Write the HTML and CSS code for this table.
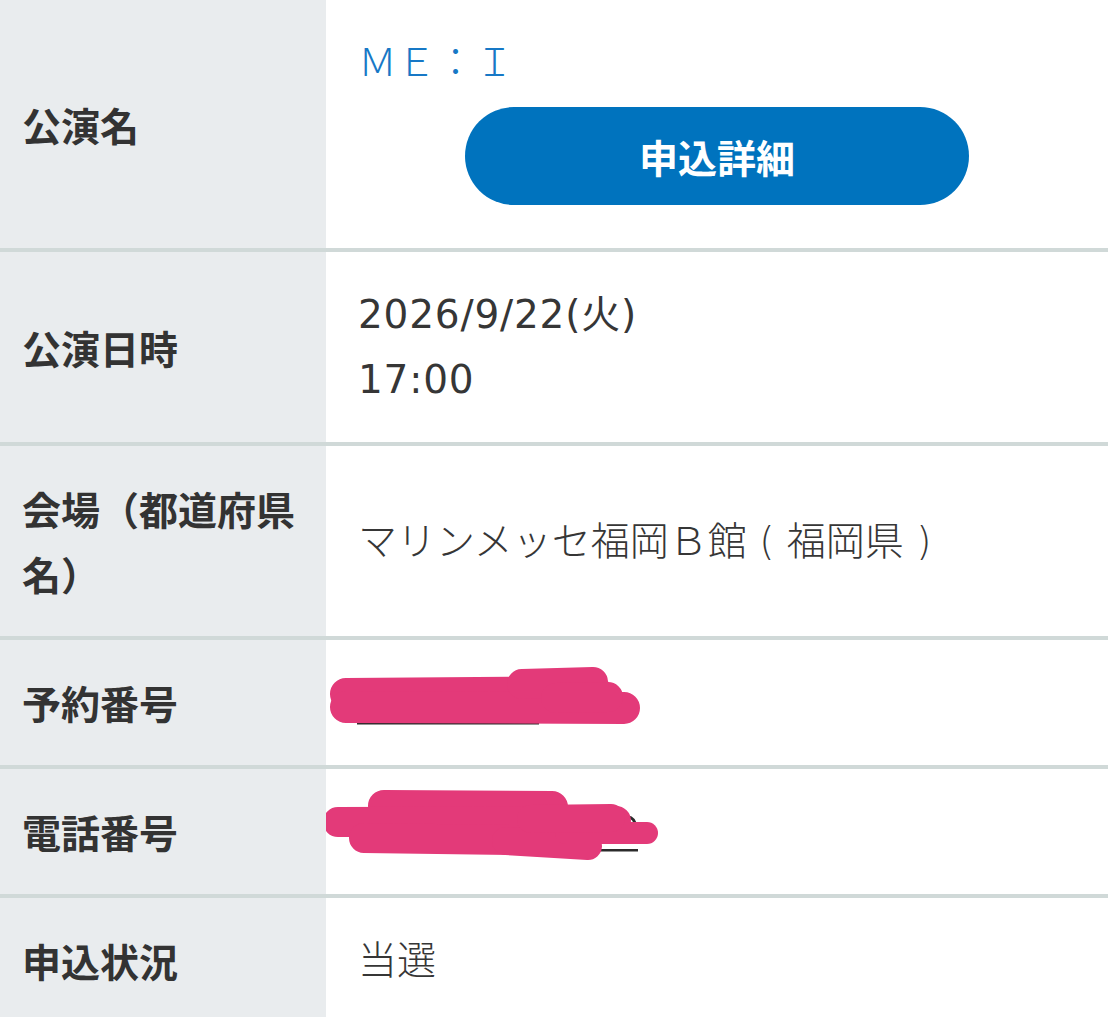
FILE: index.html
```html
<!DOCTYPE html>
<html lang="ja">
  <head>
    <meta charset="UTF-8" />
    <title>申込内容</title>
    <link rel="stylesheet" href="styles.css">
  </head>
  <body>
    <table class="detail-table">
      <tr>
        <th>公演名</th>
        <td>
          <div class="show-name">ＭＥ：Ｉ</div>
          <a class="button" href="#">申込詳細</a>
        </td>
      </tr>
      <tr>
        <th>公演日時</th>
        <td class="date">2026/9/22(火)<br />17:00</td>
      </tr>
      <tr>
        <th>会場（都道府県名）</th>
        <td>マリンメッセ福岡Ｂ館 ( 福岡県 )</td>
      </tr>
      <tr>
        <th>予約番号</th>
        <td class="masked">
          <span class="blank"></span>
          <!-- redaction scribble -->
          <svg class="scribble" viewBox="0 0 782 126" width="782" height="126">
            <rect x="31" y="82" width="182" height="2.5" fill="#2b2b2b" />
            <g stroke="#e33a79" stroke-linecap="round" fill="none">
              <line x1="20" y1="54" x2="270" y2="52" stroke-width="32" />
              <line x1="20" y1="67" x2="298" y2="68" stroke-width="32" />
              <line x1="196" y1="44" x2="267" y2="42" stroke-width="30" />
              <line x1="230" y1="58" x2="282" y2="57" stroke-width="30" />
            </g>
          </svg>
        </td>
      </tr>
      <tr>
        <th>電話番号</th>
        <td class="masked">
          <span class="blank"></span>
          <svg class="scribble" viewBox="0 0 782 123" width="782" height="123">
            <rect x="272" y="80" width="40" height="2.5" fill="#2b2b2b" />
            <path d="M299 49 Q306 46 309 54" stroke="#2b2b2b" stroke-width="3" fill="none" />
            <g stroke="#e33a79" stroke-linecap="round" fill="none">
              <line x1="58" y1="37" x2="226" y2="38" stroke-width="32" />
              <line x1="12" y1="53" x2="290" y2="52" stroke-width="30" />
              <line x1="38" y1="69" x2="190" y2="71" stroke-width="30" />
              <line x1="180" y1="72" x2="262" y2="77" stroke-width="28" />
              <line x1="240" y1="64" x2="321" y2="64" stroke-width="22" />
              <line x1="205" y1="50" x2="285" y2="49" stroke-width="28" />
            </g>
          </svg>
        </td>
      </tr>
      <tr>
        <th>申込状況</th>
        <td>当選</td>
      </tr>
    </table>
  </body>
</html>
```

FILE: styles.css
```css
/* Table of the application details */
body {
  font-family: "Noto Sans CJK JP", "Noto Sans", sans-serif;
  margin: 0;
  padding: 0;
  color: #333;
  background-color: #fff;
}
.detail-table {
  width: 100%;
  border-collapse: collapse;
  font-size: 39px;
  line-height: 65px;
}
.detail-table tr {
  border-bottom: 4px solid #d0d9d8;
}
.detail-table th {
  width: 304px;
  padding: 30px 0 30px 22px;
  background-color: #e9ecee;
  text-align: left;
  font-weight: bold;
  vertical-align: middle;
}
.detail-table td {
  padding: 30px 20px 30px 32px;
  vertical-align: middle;
  font-family: "DejaVu Sans", "Noto Sans CJK JP", sans-serif;
  font-weight: 300;
  color: #363636;
}
.detail-table td.date {
  font-weight: normal;
  letter-spacing: 0.8px;
}
.show-name {
  color: #1778c6;
}
.button {
  display: block;
  width: 504px;
  height: 98px;
  line-height: 98px;
  margin: 12px auto 13px;
  text-align: center;
  background-color: #0073be;
  color: white;
  font-family: "Noto Sans CJK JP", sans-serif;
  font-weight: bold;
  text-decoration: none;
  border-radius: 49px;
  position: relative;
  left: -6px;
}

/* Redacted values */
.masked {
  position: relative;
}
.blank {
  display: block;
  height: 65px;
}
.scribble {
  position: absolute;
  top: 0;
  left: 0;
}
```
